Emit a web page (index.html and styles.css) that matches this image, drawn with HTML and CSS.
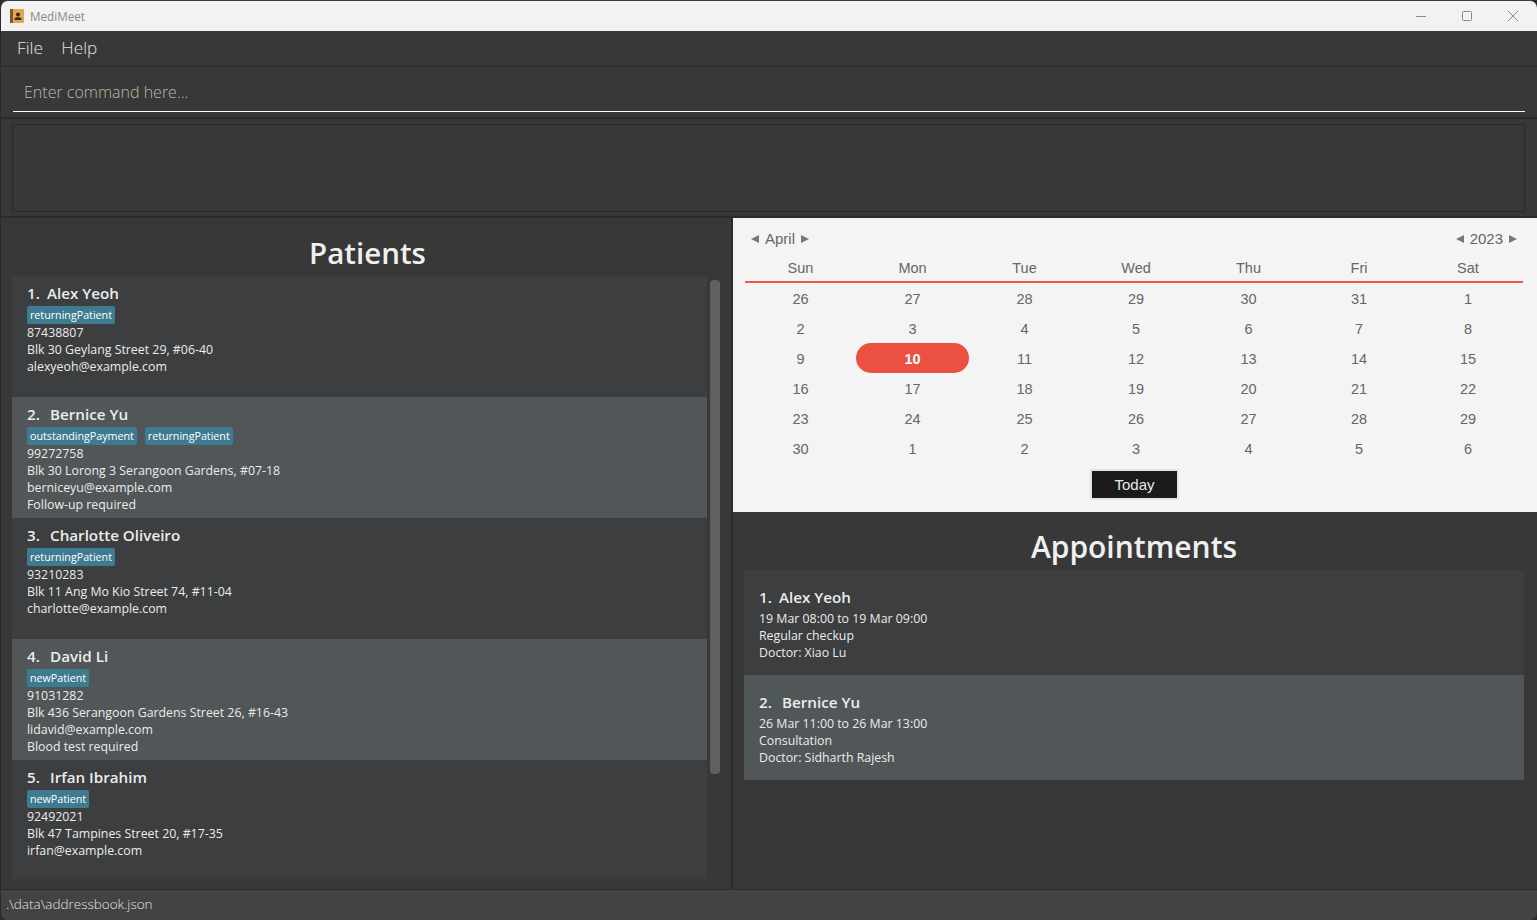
FILE: index.html
```html
<!DOCTYPE html>
<html lang="en">
<head>
<meta charset="utf-8">
<title>MediMeet</title>
<link rel="stylesheet" href="styles.css">
</head>
<body>
<div class="window">
  <header class="titlebar">
    <svg class="appicon" width="14" height="14" viewBox="0 0 14 14"><rect x="0" y="0" width="14" height="14" rx="1" fill="#e0a850"/><rect x="0" y="0" width="3" height="14" fill="#7a5a34"/><circle cx="8" cy="5.5" r="2" fill="#3a2a1a"/><path d="M4.5 11v-1.2c0-1 1.5-1.6 3.5-1.6s3.5.6 3.5 1.6V11z" fill="#3a2a1a"/></svg>
    <span class="apptitle">MediMeet</span>
    <div class="winctrls">
      <svg class="winbtn" width="12" height="12" viewBox="0 0 12 12"><path d="M1 6.5h10" stroke="#8a8a8a" fill="none"/></svg>
      <svg class="winbtn" width="12" height="12" viewBox="0 0 12 12"><rect x="1.5" y="1.5" width="9" height="9" rx="1" stroke="#8a8a8a" fill="none"/></svg>
      <svg class="winbtn" width="12" height="12" viewBox="0 0 12 12"><path d="M1 1l10 10M11 1L1 11" stroke="#8a8a8a" fill="none"/></svg>
    </div>
  </header>
  <nav class="menubar"><span class="menuitem">File</span><span class="menuitem">Help</span></nav>
  <div class="commandbar"><div class="commandfield">Enter command here...</div></div>
  <div class="resultbar"><div class="resultbox"></div></div>
  <main class="split">
    <section class="leftpane">
      <h1 class="paneltitle patients-title">Patients</h1>
      <div class="listwrap">
        <div class="patientlist">
          <article class="card odd">
            <div class="name"><span class="num num-one">1.</span>Alex Yeoh</div>
            <div class="tags"><span class="tag">returningPatient</span></div>
            <div class="line">87438807</div>
            <div class="line">Blk 30 Geylang Street 29, #06-40</div>
            <div class="line">alexyeoh@example.com</div>
          </article>
          <article class="card even">
            <div class="name"><span class="num">2.</span>Bernice Yu</div>
            <div class="tags"><span class="tag">outstandingPayment</span><span class="tag">returningPatient</span></div>
            <div class="line">99272758</div>
            <div class="line">Blk 30 Lorong 3 Serangoon Gardens, #07-18</div>
            <div class="line">berniceyu@example.com</div>
            <div class="line">Follow-up required</div>
          </article>
          <article class="card odd">
            <div class="name"><span class="num">3.</span>Charlotte Oliveiro</div>
            <div class="tags"><span class="tag">returningPatient</span></div>
            <div class="line">93210283</div>
            <div class="line">Blk 11 Ang Mo Kio Street 74, #11-04</div>
            <div class="line">charlotte@example.com</div>
          </article>
          <article class="card even">
            <div class="name"><span class="num">4.</span>David Li</div>
            <div class="tags"><span class="tag">newPatient</span></div>
            <div class="line">91031282</div>
            <div class="line">Blk 436 Serangoon Gardens Street 26, #16-43</div>
            <div class="line">lidavid@example.com</div>
            <div class="line">Blood test required</div>
          </article>
          <article class="card odd lastcard">
            <div class="name"><span class="num">5.</span>Irfan Ibrahim</div>
            <div class="tags"><span class="tag">newPatient</span></div>
            <div class="line">92492021</div>
            <div class="line">Blk 47 Tampines Street 20, #17-35</div>
            <div class="line">irfan@example.com</div>
          </article>
        </div>
        <div class="scrolltrack"><div class="scrollthumb"></div></div>
      </div>
    </section>
    <section class="rightpane">
      <div class="calendar">
        <div class="calhead">
          <div class="spinner"><svg class="arrow" width="8" height="8" viewBox="0 0 8 8"><path d="M8 0v8L0 4z"/></svg><span>April</span><svg class="arrow" width="8" height="8" viewBox="0 0 8 8"><path d="M0 0v8l8-4z"/></svg></div>
          <div class="spinner"><svg class="arrow" width="8" height="8" viewBox="0 0 8 8"><path d="M8 0v8L0 4z"/></svg><span>2023</span><svg class="arrow" width="8" height="8" viewBox="0 0 8 8"><path d="M0 0v8l8-4z"/></svg></div>
        </div>
        <div class="calgrid weekdays">
          <span>Sun</span><span>Mon</span><span>Tue</span><span>Wed</span><span>Thu</span><span>Fri</span><span>Sat</span>
        </div>
        <div class="calgrid days">
          <span>26</span><span>27</span><span>28</span><span>29</span><span>30</span><span>31</span><span>1</span>
          <span>2</span><span>3</span><span>4</span><span>5</span><span>6</span><span>7</span><span>8</span>
          <span>9</span><span class="today">10</span><span>11</span><span>12</span><span>13</span><span>14</span><span>15</span>
          <span>16</span><span>17</span><span>18</span><span>19</span><span>20</span><span>21</span><span>22</span>
          <span>23</span><span>24</span><span>25</span><span>26</span><span>27</span><span>28</span><span>29</span>
          <span>30</span><span>1</span><span>2</span><span>3</span><span>4</span><span>5</span><span>6</span>
        </div>
        <div class="todaywrap"><button class="todaybtn">Today</button></div>
      </div>
      <div class="appointments">
        <h1 class="paneltitle">Appointments</h1>
        <article class="appt odd">
          <div class="name"><span class="num num-one">1.</span>Alex Yeoh</div>
          <div class="line">19 Mar 08:00 to 19 Mar 09:00</div>
          <div class="line">Regular checkup</div>
          <div class="line">Doctor: Xiao Lu</div>
        </article>
        <article class="appt even">
          <div class="name"><span class="num">2.</span>Bernice Yu</div>
          <div class="line">26 Mar 11:00 to 26 Mar 13:00</div>
          <div class="line">Consultation</div>
          <div class="line">Doctor: Sidharth Rajesh</div>
        </article>
      </div>
    </section>
  </main>
  <footer class="statusbar">.\data\addressbook.json</footer>
</div>
</body>
</html>
```
FILE: styles.css
```css
* { box-sizing: border-box; }
html, body { margin: 0; padding: 0; height: 100%; overflow: hidden; background: #2e2e2e; }
body { font-family: "Open Sans", "Noto Sans", sans-serif; }
.window { width: 1537px; height: 920px; display: flex; flex-direction: column; background: #383838; border-left: 1px solid #2a2a2a; border-radius: 8px; overflow: hidden; }

.titlebar { height: 31px; flex: none; background: #f2f2f2; display: flex; align-items: center; padding: 0 0 1px 9px; border-top: 1px solid #3a3a3a; border-radius: 7px 7px 0 0; }
.appicon { flex: none; margin-right: 6px; }
.apptitle { font-size: 11.7px; color: #8a8a8a; }
.winctrls { margin-left: auto; display: flex; gap: 34px; padding-right: 18px; }
.winbtn { display: block; }

.menubar { height: 36px; flex: none; display: flex; gap: 18.5px; align-items: center; padding: 0 0 2px 16px; border-bottom: 1px solid #2c2c2c; }
.menuitem { font-size: 17.2px; color: #e4e4e4; font-weight: 300; }

.commandbar { height: 52px; flex: none; padding: 0 12px 6px 12px; border-bottom: 2px solid #2b2b2b; }
.commandfield { height: 45px; border-bottom: 1px solid #fff; padding: 14px 11px 0; font-size: 16px; font-weight: 300; line-height: 22px; color: #bdb8a8; }

.resultbar { height: 99px; flex: none; padding: 5px 12px 4px 11px; border-bottom: 2px solid #2b2b2b; }
.resultbox { height: 88px; border: 1px solid #2b2b2b; }

.split { flex: 1; min-height: 0; display: flex; }
.leftpane { width: 732px; flex: none; display: flex; flex-direction: column; padding: 0 0 0 11px; border-right: 2px solid #2b2b2b; }
.paneltitle { margin: 0; font-size: 30px; line-height: 58px; height: 58px; font-weight: 600; color: #f0f0f0; text-align: center; }
.patients-title { width: 711px; font-size: 29.5px; padding-top: 12px; line-height: 46px; }
.listwrap { flex: 1; min-height: 0; display: flex; }
.patientlist { width: 695px; flex: none; }
.card { height: 121px; padding: 5px 15px 0; }
.lastcard { height: 119px; }
.odd { background: #3c3e3f; }
.even { background: #515658; }
.name { font-size: 15.2px; line-height: 24px; font-weight: 600; color: #ececec; }
.num { display: inline-block; width: 23px; }
.num-one { width: 20px; }
.tags { display: flex; gap: 8px; height: 18px; margin-top: 1px; }
.tag { background: #3e7b91; color: #fff; font-size: 10.7px; line-height: 18px; height: 18px; padding: 0 3px; border-radius: 2px; }
.line { font-size: 12.35px; line-height: 17px; color: #ececec; }
.scrolltrack { flex: 1; padding: 4px 0 0 3px; }
.scrollthumb { width: 10px; height: 494px; background: #606060; border-radius: 4px; }

.rightpane { flex: 1; min-width: 0; display: flex; flex-direction: column; }
.calendar { height: 294px; flex: none; background: #f4f4f4; padding: 0 14px 0 12px; font-family: "Liberation Sans", Arial, sans-serif; color: #666; font-size: 14.5px; }
.calhead { height: 42px; display: flex; justify-content: space-between; align-items: center; padding: 0 6px 1px; }
.spinner { display: flex; align-items: center; gap: 6px; font-size: 15px; }
.arrow { display: block; fill: #777; }
.calgrid { display: grid; grid-template-columns: 111px 113px 111px 112px 113px 108px 110px; text-align: center; }
.weekdays { height: 23px; line-height: 16px; border-bottom: 2px solid #ec5a4d; }
.days { grid-auto-rows: 30px; }
.days span { line-height: 32px; }
.days .today { background: #ec5040; color: #fff; font-weight: 700; border-radius: 15px; }
.todaywrap { display: flex; justify-content: center; padding-left: 1px; margin-top: 6px; }
.todaybtn { width: 89px; height: 31px; background: #1a1a1a; border: 2px solid #e4e4e4; color: #e8e8e8; font: 15px "Liberation Sans", Arial, sans-serif; padding: 0; }

.appointments { flex: 1; min-height: 0; padding: 6px 13px 0 11px; }
.appointments .paneltitle { height: 52px; line-height: 58px; }
.appt { height: 105px; padding: 15px 15px 0; }
.appt .name { margin-bottom: 1px; }

.statusbar { height: 31px; flex: none; background: #434343; border-top: 1px solid #2b2b2b; padding-left: 5px; font-size: 13.5px; font-weight: 300; line-height: 29px; color: #e4e4e4; }
```
